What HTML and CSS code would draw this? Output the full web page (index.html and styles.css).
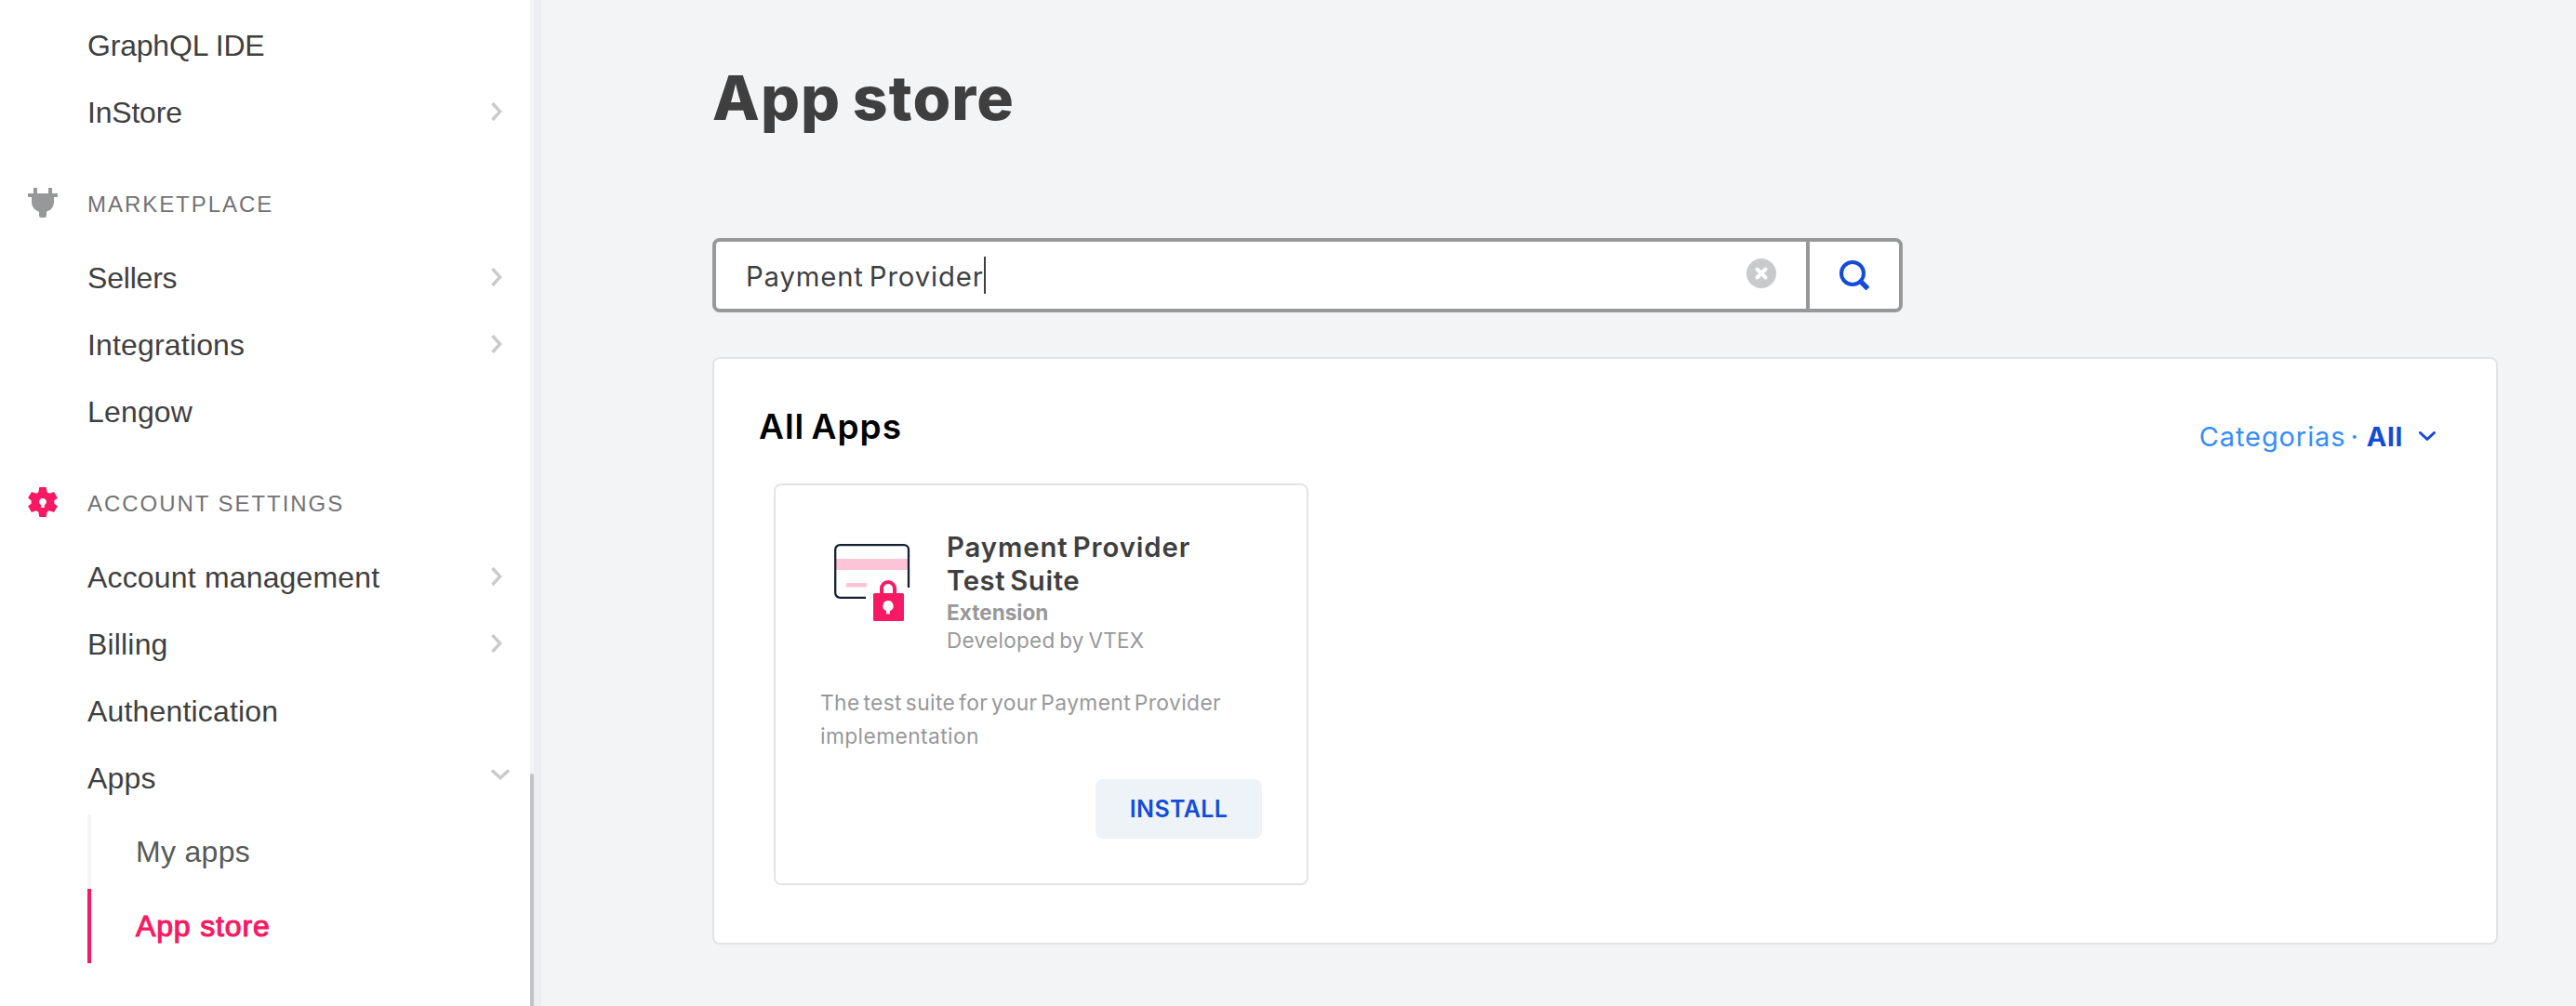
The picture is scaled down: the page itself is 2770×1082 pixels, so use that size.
FILE: index.html
```html
<!DOCTYPE html>
<html lang="en">
<head>
<meta charset="utf-8">
<title>App store</title>
<link rel="stylesheet" href="styles.css">
</head>
<body>
<div class="app">
  <aside class="sidebar">
    <nav class="menu">
      <a class="menu-item menu-item-tight">GraphQL IDE</a>
      <a class="menu-item menu-item-tight">InStore <svg class="chevron" viewBox="0 0 12 20"><path d="M1.500 1 9.700 10l-8.200 9"/></svg></a>
      <div class="menu-header">
        <svg class="menu-icon" viewBox="0 0 32 32" fill="#979899"><path d="M6 0h4v6h12V0h4v6h6v4h-4v6a10.500 10.500 0 0 1-8 9.700V30a2 2 0 0 1-2 2h-4a2 2 0 0 1-2-2v-4.300A10.500 10.500 0 0 1 4 16v-6H0V6h6z"/></svg>
        <span class="menu-title">MARKETPLACE</span>
      </div>
      <a class="menu-item menu-item-tight">Sellers <svg class="chevron" viewBox="0 0 12 20"><path d="M1.500 1 9.700 10l-8.200 9"/></svg></a>
      <a class="menu-item">Integrations <svg class="chevron" viewBox="0 0 12 20"><path d="M1.500 1 9.700 10l-8.200 9"/></svg></a>
      <a class="menu-item">Lengow</a>
      <div class="menu-header">
        <svg class="menu-icon" viewBox="0 0 32 32"><path fill="#f71963" d="M12.300 0h7.400l.9 5.200 2.400 1.500 5-1.700 3.900 6.500-3.600 3v3l3.600 3-3.900 6.500-5-1.700-2.400 1.500-.9 5.200h-7.400l-.9-5.200L9 25.300 4 27 .1 20.500l3.600-3v-3l-3.600-3L4 5l5 1.700 2.400-1.500z"/><path fill="#fff" d="M16 12a3.700 3.700 0 0 1 1.800 7v3h-3.600v-3a3.700 3.700 0 0 1 1.800-7z"/></svg>
        <span class="menu-title">ACCOUNT SETTINGS</span>
      </div>
      <a class="menu-item">Account management <svg class="chevron" viewBox="0 0 12 20"><path d="M1.500 1 9.700 10l-8.200 9"/></svg></a>
      <a class="menu-item">Billing <svg class="chevron" viewBox="0 0 12 20"><path d="M1.500 1 9.700 10l-8.200 9"/></svg></a>
      <a class="menu-item">Authentication</a>
      <a class="menu-item">Apps <svg class="chevron chevron-down" viewBox="0 0 20 12"><path d="M1 1.500l9 8.200 9-8.200"/></svg></a>
      <div class="submenu">
        <a class="submenu-item">My apps</a>
        <a class="submenu-item submenu-item-active">App store</a>
      </div>
    </nav>
    <div class="scrollbar"><div class="scroll-thumb"></div></div>
  </aside>
  <main class="content">
    <h1 class="page-title">App store</h1>
    <div class="search">
      <div class="search-field">
        <span class="search-text">Payment Provider</span><span class="caret"></span>
        <svg class="clear" viewBox="0 0 32 32"><circle cx="16" cy="16" r="16" fill="#c9cacc"/><path d="M11.500 11.500l9 9m0-9l-9 9" stroke="#fff" stroke-width="4" stroke-linecap="round"/></svg>
      </div>
      <div class="search-button">
        <svg class="magnifier" viewBox="0 0 32 32"><circle cx="14" cy="14" r="12" fill="none" stroke="#134cd8" stroke-width="4"/><rect x="27" y="11.200" width="10.400" height="5.600" rx="1.300" fill="#134cd8" transform="rotate(45 14 14)"/></svg>
      </div>
    </div>
    <section class="panel">
      <div class="panel-head">
        <h2 class="panel-title">All Apps</h2>
        <div class="filter"><span class="filter-label">Categorias</span><span class="filter-dot">·</span><span class="filter-value">All</span>
          <svg class="filter-chevron" viewBox="0 0 18 11"><path d="M1.500 1.500 9 8.500l7.500-7"/></svg></div>
      </div>
      <article class="card">
        <div class="card-head">
          <svg class="card-icon" viewBox="0 0 82 84"><path d="M2 17h78v12H2zM13 43h22v4.500H13z" fill="#fdc4d8"/><path d="M80 48V7.200a5 5 0 0 0-5-5H6.200a5 5 0 0 0-5 5v46.600a5 5 0 0 0 5 5H34" fill="none" stroke="#142032" stroke-width="2.300"/><path d="M51 56v-7a7 7 0 0 1 14 0v7" fill="none" stroke="#f71963" stroke-width="4"/><rect x="42" y="54" width="33" height="30" rx="1.500" fill="#f71963"/><path d="M58 62a5.700 5.700 0 0 1 2 11v3.300h-4V73a5.700 5.700 0 0 1 2-11z" fill="#fff"/></svg>
          <div class="card-info">
            <h3 class="card-title">Payment Provider<br><span class="card-title-second">Test Suite</span></h3>
            <div class="card-type">Extension</div>
            <div class="card-author">Developed by VTEX</div>
          </div>
        </div>
        <p class="card-text">The test suite for your Payment Provider<br>implementation</p>
        <button class="install">INSTALL</button>
      </article>
    </section>
  </main>
</div>
</body>
</html>
```
FILE: styles.css
```css
* { box-sizing: border-box; }

body {
  margin: 0;
  background: #f2f4f5;
  color: #3f3f40;
  font-family: Inter, sans-serif;
}

h1, h2, h3, p { margin: 0; }

.app {
  display: flex;
  height: 1082px;
  overflow: hidden;
}

.sidebar {
  display: flex;
  flex: none;
  width: 582px;
  background: #fff;
  border-right: 8px solid #edeef1;
  font-family: "Liberation Sans", Arial, sans-serif;
}

.menu { width: 570px; padding-top: 13px; }

.menu-item {
  display: flex;
  align-items: center;
  justify-content: space-between;
  height: 72px;
  padding: 0 30px 0 94px;
  font-size: 32px;
  letter-spacing: .17px;
}

.menu-item-tight { letter-spacing: -.2px; }

.chevron {
  width: 12px;
  height: 20px;
  margin-bottom: 2px;
  fill: none;
  stroke: #c9cacc;
  stroke-width: 3.4;
}

.chevron-down {
  width: 20px;
  height: 12px;
  margin: 0 -8px 8px 0;
}

.menu-header {
  display: flex;
  gap: 32px;
  height: 106px;
  padding: 45px 0 0 30px;
}

.menu-icon { width: 32px; height: 32px; }

.menu-title {
  color: #727273;
  font-size: 24px;
  line-height: 36px;
  letter-spacing: 1.95px;
}

.submenu { margin: 3px 0 0 94px; }

.submenu-item {
  display: block;
  height: 80px;
  padding: 0 0 0 48px;
  border-left: 4px solid #f2f4f5;
  color: #585959;
  font-size: 32px;
  line-height: 80px;
  letter-spacing: .3px;
}

.submenu-item-active {
  border-color: #f71963;
  color: #f71963;
  letter-spacing: .85px;
  -webkit-text-stroke: 1.1px #f71963;
}

.scrollbar {
  width: 4px;
  padding-top: 832px;
  background: #f2f4f5;
}

.scroll-thumb {
  height: 250px;
  background: #c1c2c4;
  border-radius: 2px 2px 0 0;
}

.content { padding: 65px 0 0 184px; }

.page-title {
  height: 80px;
  font-size: 66px;
  font-weight: 800;
  line-height: 80px;
  letter-spacing: 1.1px;
  word-spacing: -3px;
}

.search {
  display: flex;
  width: 1280px;
  height: 80px;
  margin-top: 111px;
  background: #fff;
  border: 4px solid #979899;
  border-radius: 8px;
}

.search-field {
  display: flex;
  flex: 1;
  align-items: center;
  padding: 0 32px;
  font-size: 29.3px;
  letter-spacing: .85px;
  word-spacing: -3px;
}

.search-text { padding-top: 2px; }

.caret { width: 2px; height: 40px; background: #3f3f40; }

.clear { width: 32px; height: 32px; margin: 0 0 4px auto; }

.search-button {
  width: 100px;
  padding: 20px 0 0 32px;
  border-left: 4px solid #979899;
}

.magnifier { width: 32px; height: 32px; }

.panel {
  width: 1920px;
  height: 632px;
  margin-top: 48px;
  padding: 48px 64px 0;
  background: #fff;
  border: 2px solid #e3e4e6;
  border-radius: 8px;
}

.panel-head {
  display: flex;
  justify-content: space-between;
  height: 86px;
  margin-left: -16px;
}

.panel-title {
  color: #000;
  font-size: 37px;
  font-weight: 600;
  line-height: 49px;
  letter-spacing: 1px;
  word-spacing: -3px;
}

.filter {
  display: flex;
  font-size: 29px;
  line-height: 72px;
}

.filter-label { color: #368df7; letter-spacing: .9px; }
.filter-dot { margin: 0 9px 0 5px; color: #368df7; }
.filter-value { color: #134cd8; font-weight: 700; letter-spacing: .6px; }

.filter-chevron {
  width: 18px;
  height: 11px;
  margin: 30px 1px 0 17px;
  fill: none;
  stroke: #134cd8;
  stroke-width: 3;
  stroke-linecap: round;
  stroke-linejoin: round;
}

.card {
  display: flex;
  flex-direction: column;
  width: 575px;
  height: 432px;
  padding: 48px;
  border: 2px solid #e3e4e6;
  border-radius: 8px;
}

.card-head { display: flex; gap: 39px; height: 168px; }

.card-icon { width: 82px; height: 84px; margin: 14px 0 0 15px; }

.card-info { padding-top: 1px; }

.card-title {
  font-size: 29.3px;
  font-weight: 600;
  line-height: 36px;
  letter-spacing: .9px;
  word-spacing: -3px;
  white-space: nowrap;
}

.card-title-second { letter-spacing: .6px; }

.card-type, .card-author {
  color: #979899;
  font-size: 22.5px;
  line-height: 30px;
  letter-spacing: .3px;
  word-spacing: -2px;
  white-space: nowrap;
}

.card-type { margin-top: 1px; font-weight: 700; letter-spacing: .05px; }

.card-text {
  color: #979899;
  font-size: 22.8px;
  line-height: 36px;
  letter-spacing: .38px;
  word-spacing: -3px;
  white-space: nowrap;
}

.install {
  align-self: flex-end;
  width: 179px;
  height: 64px;
  margin-top: 28px;
  padding: 0;
  background: #edf3f7;
  border: 0;
  border-radius: 8px;
  color: #134cd8;
  font: 600 25px/64px Inter, sans-serif;
  letter-spacing: .35px;
}
```
